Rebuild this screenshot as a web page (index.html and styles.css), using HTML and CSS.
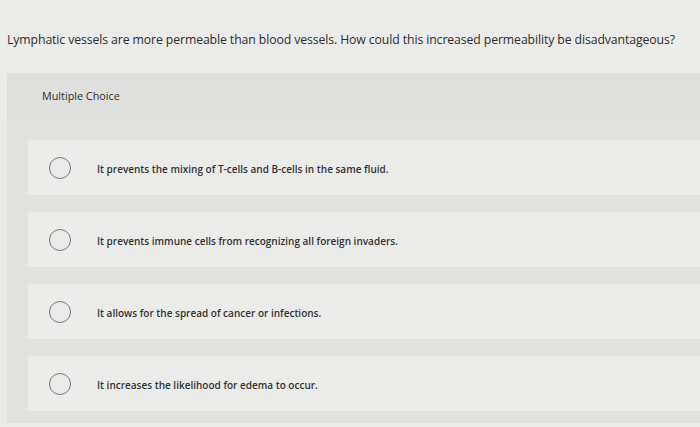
FILE: index.html
```html
<!DOCTYPE html>
<html>
<head>
<meta charset="utf-8">
<link rel="stylesheet" href="styles.css">
</head>
<body>
<div class="page">
  <p class="question">Lymphatic vessels are more permeable than blood vessels. How could this increased permeability be disadvantageous?</p>
  <div class="panel">
    <div class="panel-head">Multiple Choice</div>
    <ul class="options">
      <li class="option"><span class="radio"></span><span class="label">It prevents the mixing of T-cells and B-cells in the same fluid.</span></li>
      <li class="option"><span class="radio"></span><span class="label">It prevents immune cells from recognizing all foreign invaders.</span></li>
      <li class="option"><span class="radio"></span><span class="label">It allows for the spread of cancer or infections.</span></li>
      <li class="option"><span class="radio"></span><span class="label">It increases the likelihood for edema to occur.</span></li>
    </ul>
  </div>
</div>
</body>
</html>
```

FILE: styles.css
```css
html, body {
  margin: 0;
  padding: 0;
}
body {
  background: #ebebe9;
  font-family: "Open Sans", "Liberation Sans", sans-serif;
  color: #2e2e2e;
  width: 700px;
  height: 427px;
  overflow: hidden;
}
.page {
  padding: 32px 0 0 7px;
}
.question {
  margin: 0;
  font-size: 12.25px;
  line-height: 16px;
  height: 16px;
  white-space: nowrap;
  letter-spacing: -0.1px;
}
.panel {
  margin-top: 25px;
  background: #e1e1df;
  padding-bottom: 12px;
}
.panel-head {
  height: 46px;
  padding-left: 35px;
  font-size: 10.8px;
  line-height: 46px;
  box-sizing: border-box;
  background: #dfdfdd;
}
.options {
  list-style: none;
  margin: 0;
  padding: 21px 0 0 21px;
  display: flex;
  flex-direction: column;
  gap: 17px;
}
.option {
  height: 55px;
  background: #ebebe9;
  display: flex;
  align-items: center;
  padding-left: 21px;
}
.radio {
  width: 20px;
  height: 20px;
  border: 1.3px solid #7a7a7a;
  border-radius: 50%;
  flex: none;
}
.label {
  margin-left: 26px;
  padding-top: 3px;
  font-size: 10px;
  font-weight: 600;
  color: #333;
  white-space: nowrap;
}
```
